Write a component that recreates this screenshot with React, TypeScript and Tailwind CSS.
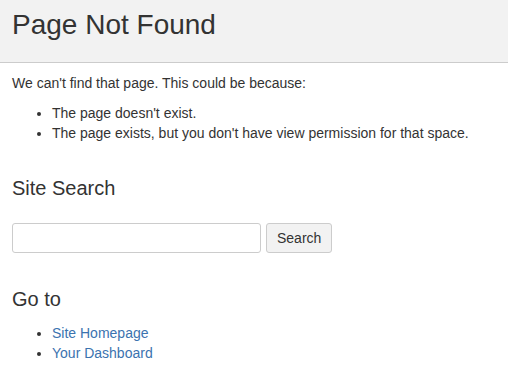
export default function App() {
  return (
    <div className="min-h-screen bg-white text-[#333] font-['Liberation_Sans',Arial,sans-serif] text-[14px] leading-[20px]">
      <div className="h-[63px] bg-[#f2f2f2] border-b border-[#ccc] px-3 pt-[7px]">
        <h1 className="text-[28px] leading-[36px] text-[#333]">Page Not Found</h1>
      </div>

      <div className="px-3 pt-[10px]">
        <p className="mb-[10px]">We can't find that page. This could be because:</p>
        <ul className="list-disc pl-10">
          <li>The page doesn't exist.</li>
          <li>The page exists, but you don't have view permission for that space.</li>
        </ul>

        <h2 className="mt-[33px] text-[20px] leading-[24px]">Site Search</h2>
        <form className="mt-[23px] flex items-center gap-[5px]" onSubmit={e => e.preventDefault()}>
          <input
            type="text"
            className="w-[249px] h-[30px] border border-[#ccc] rounded-[3px] bg-white px-2"
          />
          <button className="h-[30px] px-[10px] border border-[#ccc] rounded-[3px] bg-[#f2f2f2] text-[#333]">
            Search
          </button>
        </form>

        <h2 className="mt-[34px] text-[20px] leading-[24px]">Go to</h2>
        <ul className="mt-[12px] list-disc pl-10">
          <li><a href="#" className="text-[#3b73af]">Site Homepage</a></li>
          <li><a href="#" className="text-[#3b73af]">Your Dashboard</a></li>
        </ul>
      </div>
    </div>
  );
}
